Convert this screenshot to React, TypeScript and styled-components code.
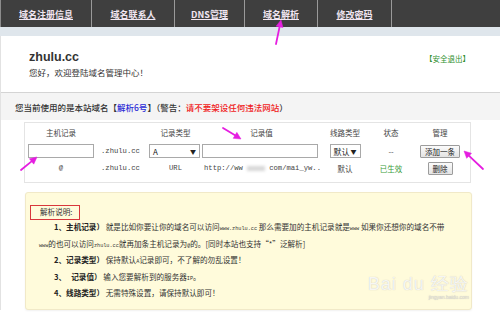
import styled, { createGlobalStyle } from "styled-components";

const GlobalStyle = createGlobalStyle`
  html, body {
    margin: 0;
    padding: 0;
    background: #fff;
  }

  body {
    font-family: "Noto Sans CJK SC", "Noto Sans", sans-serif;
    color: #333;
  }
`;

const Page = styled.div`
  position: relative;
  width: 500px;
  height: 322px;
  overflow: hidden;
  background: #fff;
`;

const Nav = styled.nav`
  display: flex;
  height: 27px;
  background-color: #3f3f3f;
  border-left: 1px solid #8c8c8c;
  box-sizing: border-box;
`;

const Tab = styled.a<{ $width: number }>`
  display: flex;
  align-items: center;
  justify-content: center;
  width: ${(p) => p.$width}px;
  padding-top: 2px;
  box-sizing: border-box;
  border-right: 1px solid #9a9a9a;
  color: #f1e6f1;
  font-size: 9px;
  font-weight: 700;
  text-decoration: underline;
  text-underline-offset: 1px;
`;

const Band = styled.div`
  height: 9px;
  background-color: #dfe6ec;
`;

const Body = styled.div`
  border-left: 1px solid #e2e2e2;
`;

const Header = styled.header`
  display: flex;
  justify-content: space-between;
  align-items: flex-start;
  height: 56px;
  padding: 14px 30px 0 28px;
  box-sizing: border-box;
`;

const Domain = styled.h1`
  margin: 0;
  font-family: "Liberation Sans", Arial, sans-serif;
  font-size: 12.5px;
  line-height: 14px;
  font-weight: 700;
  color: #333;
`;

const Greeting = styled.p`
  margin: 2px 0 0;
  font-size: 8.5px;
  line-height: 12px;
  color: #333;
`;

const Logout = styled.a`
  margin-top: 3px;
  font-size: 7.5px;
  color: #2f8f2f;
  text-decoration: none;
`;

const Notice = styled.div`
  display: flex;
  align-items: center;
  height: 27px;
  padding-left: 14px;
  border-top: 1px solid #d4d4d4;
  background-color: #f4f4f4;
  font-size: 8.5px;
  font-weight: 500;
  color: #333;
`;

const Tone = styled.span<{ $color: string }>`
  color: ${(p) => p.$color};
`;

const TableBox = styled.div`
  margin: 2px 29px 0 23px;
  height: 61px;
  border: 1px solid #e4e4e4;
  box-sizing: border-box;
  display: grid;
  grid-template-columns: 72px 52px 53px 119px 48px 44px 54px;
  grid-template-rows: 19px 18px 16px;
  align-items: center;
  font-size: 7.5px;
  color: #444;
`;

const Cell = styled.div<{ $align?: "left" | "center" }>`
  display: flex;
  align-items: center;
  justify-content: ${(p) => (p.$align === "left" ? "flex-start" : "center")};
  white-space: nowrap;
`;

const Mono = styled.span`
  font-family: "Liberation Mono", "Courier New", monospace;
  font-size: 7.2px;
  color: #444;
`;

const Latin = styled.span`
  font-family: "Liberation Mono", "Courier New", monospace;
  font-size: 5.2px;
`;

const Blur = styled.span`
  display: inline-block;
  width: 28px;
  height: 5px;
  margin: 0 4px;
  background: #d8d8d8;
  filter: blur(1.5px);
`;

const TextInput = styled.input<{ $width: number }>`
  width: ${(p) => p.$width}px;
  height: 14px;
  margin: 0;
  padding: 0;
  border: 1px solid #a9a9a9;
  box-sizing: border-box;
  background: #fff;
`;

const FakeSelect = styled.div<{ $width: number }>`
  display: flex;
  justify-content: space-between;
  align-items: center;
  width: ${(p) => p.$width}px;
  height: 14px;
  padding: 0 3px;
  border: 1px solid #a9a9a9;
  box-sizing: border-box;
  font-size: 8px;
  color: #222;

  & > i {
    font-style: normal;
    font-size: 6px;
  }
`;

const Button = styled.button`
  height: 13px;
  padding: 0 4px;
  border: 1px solid #9c9c9c;
  border-radius: 1px;
  background: linear-gradient(#fbfbfb, #e3e3e3);
  font-family: inherit;
  font-size: 7.5px;
  line-height: 11px;
  color: #222;
`;

const Help = styled.section`
  position: relative;
  margin: 9px 28px 0 24px;
  height: 118px;
  padding: 12px 0 0 4px;
  box-sizing: border-box;
  background-color: #fffbdb;
  border: 1px solid #f1e9c8;
  border-radius: 3px;
  box-shadow: 0 1px 2px rgba(0, 0, 0, 0.06);
  font-size: 7.6px;
  color: #333;
`;

const HelpTitle = styled.div`
  display: inline-block;
  height: 15px;
  padding: 0 6px 0 9px;
  border: 1.5px solid #d8373c;
  box-sizing: border-box;
  line-height: 12px;
`;

const HelpLine = styled.p<{ $indent: number }>`
  margin: 0 0 0 9px;
  padding-left: ${(p) => p.$indent}px;
  line-height: 14.6px;
  white-space: nowrap;

  & b {
    font-weight: 700;
    color: #222;
  }
`;

const Watermark = styled.div`
  position: absolute;
  right: 2px;
  bottom: 8px;
  text-align: right;
  color: rgba(255, 255, 255, 0.85);
  text-shadow: 0 0 1px rgba(150, 150, 150, 0.6);
  font-family: "Liberation Sans", Arial, sans-serif;
  line-height: 1;

  & > strong {
    display: block;
    font-size: 18px;
    font-weight: 400;
    letter-spacing: 1px;
  }

  & > small {
    font-size: 5px;
    color: rgba(220, 220, 220, 0.8);
  }
`;

const Marks = styled.svg`
  position: absolute;
  inset: 0;
  pointer-events: none;
`;

const tabs = [
  { label: "域名注册信息", width: 91 },
  { label: "域名联系人", width: 83 },
  { label: "DNS管理", width: 70 },
  { label: "域名解析", width: 73 },
  { label: "修改密码", width: 74 },
];

function Arrow({ x1, y1, x2, y2 }: { x1: number; y1: number; x2: number; y2: number }) {
  const dx = x2 - x1;
  const dy = y2 - y1;
  const len = Math.hypot(dx, dy);
  const ux = dx / len;
  const uy = dy / len;
  const bx = x2 - ux * 7;
  const by = y2 - uy * 7;
  const head = `${x2},${y2} ${bx - uy * 3.5},${by + ux * 3.5} ${bx + uy * 3.5},${by - ux * 3.5}`;
  return (
    <g fill="#e51ee0" stroke="#e51ee0">
      <line x1={x1} y1={y1} x2={bx} y2={by} strokeWidth={1.8} strokeLinecap="round" />
      <polygon points={head} strokeWidth={0.5} />
    </g>
  );
}

export default function App() {
  return (
    <Page>
      <GlobalStyle />
      <Nav>
        {tabs.map((t) => (
          <Tab key={t.label} href="#" $width={t.width}>
            {t.label}
          </Tab>
        ))}
      </Nav>
      <Band />

      <Body>
        <Header>
          <div>
            <Domain>zhulu.cc</Domain>
            <Greeting>您好，欢迎登陆域名管理中心！</Greeting>
          </div>
          <Logout href="#">【安全退出】</Logout>
        </Header>

        <Notice>
          您当前使用的是本站域名【<Tone $color="#2b2bd6">解析6号</Tone>】（警告：
          <Tone $color="#f01a1a">请不要架设任何违法网站</Tone>）
        </Notice>

        <TableBox>
          <Cell>主机记录</Cell>
          <Cell />
          <Cell>记录类型</Cell>
          <Cell>记录值</Cell>
          <Cell>线路类型</Cell>
          <Cell>状态</Cell>
          <Cell>管理</Cell>

          <Cell $align="left" style={{ paddingLeft: 3 }}>
            <TextInput $width={66} />
          </Cell>
          <Cell $align="left" style={{ paddingLeft: 4 }}>
            <Mono>.zhulu.cc</Mono>
          </Cell>
          <Cell $align="left">
            <FakeSelect $width={51}>
              A<i>▼</i>
            </FakeSelect>
          </Cell>
          <Cell $align="left">
            <TextInput $width={116} />
          </Cell>
          <Cell>
            <FakeSelect $width={31}>
              默认<i>▼</i>
            </FakeSelect>
          </Cell>
          <Cell>--</Cell>
          <Cell>
            <Button>添加一条</Button>
          </Cell>

          <Cell>
            <Mono>@</Mono>
          </Cell>
          <Cell $align="left" style={{ paddingLeft: 4 }}>
            <Mono>.zhulu.cc</Mono>
          </Cell>
          <Cell>
            <Mono>URL</Mono>
          </Cell>
          <Cell $align="left" style={{ paddingLeft: 2 }}>
            <Mono>http://ww</Mono>
            <Blur />
            <Mono>com/mai_yw..</Mono>
          </Cell>
          <Cell>默认</Cell>
          <Cell>
            <Tone $color="#3a9c3a">已生效</Tone>
          </Cell>
          <Cell>
            <Button>删除</Button>
          </Cell>
        </TableBox>

        <Help>
          <HelpTitle>解析说明:</HelpTitle>
          <HelpLine $indent={15}>
            <b>1、主机记录）</b> 就是比如你要让你的域名可以访问<Latin>www.zhulu.cc</Latin> 那么需要加的主机记录就是
            <Latin>www</Latin> 如果你还想你的域名不带
          </HelpLine>
          <HelpLine $indent={0}>
            <Latin>www</Latin>的也可以访问<Latin>zhulu.cc</Latin>就再加条主机记录为<Latin>@</Latin>的。[同时本站也支持“*”泛解析]
          </HelpLine>
          <HelpLine $indent={15}>
            <b>2、记录类型）</b> 保持默认<Latin>A</Latin>记录即可，不了解的勿乱设置！
          </HelpLine>
          <HelpLine $indent={15}>
            <b>3、&nbsp;&nbsp;&nbsp;记录值）</b> 输入您要解析到的服务器<Latin>IP</Latin>。
          </HelpLine>
          <HelpLine $indent={15}>
            <b>4、线路类型）</b> 无需特殊设置，请保持默认即可！
          </HelpLine>
          <Watermark>
            <strong>Bai du 经验</strong>
            <small>jingyan.baidu.com</small>
          </Watermark>
        </Help>
      </Body>

      <Marks width={500} height={322} viewBox="0 0 500 322">
        <Arrow x1={276} y1={44} x2={281} y2={20} />
        <Arrow x1={21} y1={170} x2={37} y2={157} />
        <Arrow x1={223} y1={128} x2={241} y2={139} />
        <Arrow x1={483} y1={169} x2={464} y2={151} />
      </Marks>
    </Page>
  );
}
